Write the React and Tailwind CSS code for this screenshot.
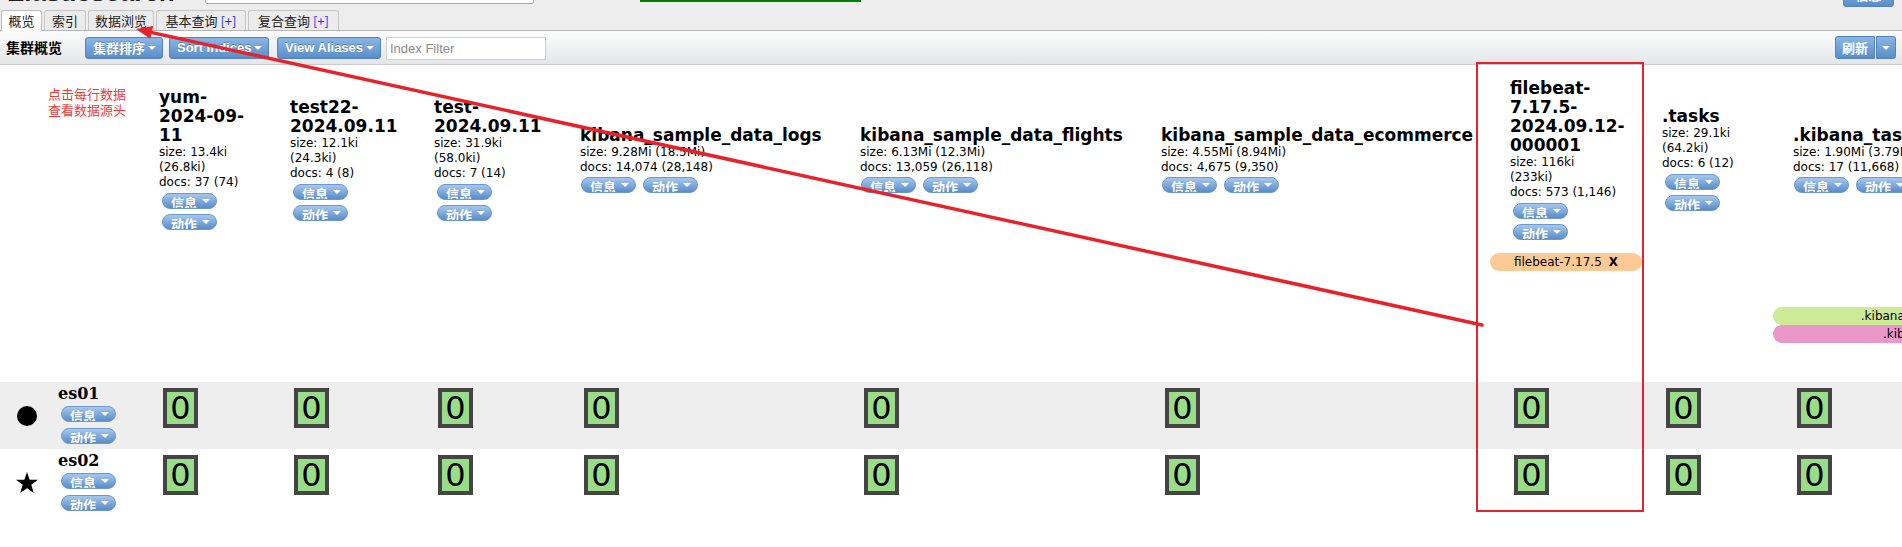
import React from 'react';

const indices = [
  { w: 'w-[131px]', name: ['yum-', '2024-09-', '11'], stats: ['size: 13.4ki', '(26.8ki)', 'docs: 37 (74)'] },
  { w: 'w-[144px]', name: ['test22-', '2024.09.11'], stats: ['size: 12.1ki', '(24.3ki)', 'docs: 4 (8)'] },
  { w: 'w-[146px]', name: ['test-', '2024.09.11'], stats: ['size: 31.9ki', '(58.0ki)', 'docs: 7 (14)'] },
  { w: 'w-[280px]', name: ['kibana_sample_data_logs'], stats: ['size: 9.28Mi (18.5Mi)', 'docs: 14,074 (28,148)'], inline: true },
  { w: 'w-[301px]', name: ['kibana_sample_data_flights'], stats: ['size: 6.13Mi (12.3Mi)', 'docs: 13,059 (26,118)'], inline: true },
  { w: 'w-[349px]', name: ['kibana_sample_data_ecommerce'], stats: ['size: 4.55Mi (8.94Mi)', 'docs: 4,675 (9,350)'], inline: true },
  { w: 'w-[152px]', name: ['filebeat-', '7.17.5-', '2024.09.12-', '000001'], stats: ['size: 116ki', '(233ki)', 'docs: 573 (1,146)'] },
  { w: 'w-[131px]', name: ['.tasks'], stats: ['size: 29.1ki', '(64.2ki)', 'docs: 6 (12)'] },
  { w: 'w-[355px]', name: ['.kibana_task_manager_7.17.5_001'], stats: ['size: 1.90Mi (3.79Mi)', 'docs: 17 (11,668)'], inline: true },
];

// alias rows: [row, column index, text, colour]
const aliases = [
  { row: 0, col: 6, text: 'filebeat-7.17.5', bg: 'bg-[#fdca96]', x: true },
  { row: 3, col: 8, text: '.kibana_task_manager_7.17.5', bg: 'bg-[#cdeb97]' },
  { row: 4, col: 8, text: '.kibana_task_manager', bg: 'bg-[#ea98c9]' },
];

const nodes = [
  { name: 'es01', icon: 'dot', bg: 'bg-[#eeeeee]' },
  { name: 'es02', icon: 'star', bg: 'bg-white' },
];

const cjk = "font-['Noto_Sans_CJK_SC',sans-serif]";

function Caret() {
  return <span className="w-0 h-0 border-x-[4px] border-x-transparent border-t-[4px] border-t-white" />;
}

function Pill({ label, className = '' }) {
  return (
    <div className={`w-[55px] h-[16px] rounded-full border border-[#6b99cf] bg-gradient-to-b from-[#a6c8ee] to-[#5a8cc7] flex items-start overflow-hidden pl-[8px] ${className}`}>
      <span className={`text-[13px] font-bold text-white leading-[17px] ${cjk}`}>{label}</span>
      <span className="ml-[5px] mt-[5px] flex"><Caret /></span>
    </div>
  );
}

function ToolBtn({ label, w, latin }) {
  return (
    <div className={`${w} h-[22px] rounded-[3px] border border-[#5283bf] bg-gradient-to-b from-[#8ab6e5] to-[#5a8dc8] flex items-center justify-between pl-[7px] pr-[6px] text-white text-[13px] font-bold [text-shadow:0_-1px_0_rgba(0,0,0,0.25)] ${latin ? "font-['Liberation_Sans',sans-serif]" : cjk}`}>
      <span className="leading-none">{label}</span>
      <Caret />
    </div>
  );
}

function Shard() {
  return (
    <div className="w-[35px] h-[40px] border-4 border-[#444] bg-[#99dd88] text-[32px] leading-[32px] text-center font-['DejaVu_Sans',sans-serif]">0</div>
  );
}

function Star() {
  return (
    <svg width="22" height="21" viewBox="0 0 24 23">
      <polygon points="12,0 14.9,8.4 24,8.6 16.7,14 19.4,23 12,17.7 4.6,23 7.3,14 0,8.6 9.1,8.4" fill="#000" />
    </svg>
  );
}

export default function App() {
  return (
    <div className="relative w-[1902px] h-[547px] overflow-hidden bg-white text-black font-['DejaVu_Sans','Noto_Sans_CJK_SC',sans-serif]">
      {/* header with cut-off top bar and tabs */}
      <div className="h-[31px] bg-[#ededed] border-b border-[#b8b8b8] flex flex-col">
        <div className="h-[10px] flex items-end overflow-hidden">
          <span className="ml-[7px] mb-[5px] text-[26px] font-bold leading-none text-[#222] font-['Liberation_Sans',sans-serif]">Elasticsearch</span>
          <div className="ml-[30px] mb-[6px] w-[329px] h-[24px] bg-white border border-[#a9a9a9] rounded-[2px]" />
          <div className="ml-[106px] mb-[8px] w-[221px] h-[20px] bg-[#008000] text-[13px] leading-[20px] text-center text-black">集群健康值: green (78 of 78)</div>
          <div className="ml-auto mr-[8px] mb-[3px] w-[51px] h-[22px] rounded-[3px] border border-[#5283bf] bg-gradient-to-b from-[#8ab6e5] to-[#5a8dc8] text-white text-[13px] font-bold text-center leading-[20px]">信息</div>
        </div>
        <div className={`h-[20px] flex items-end gap-[2px] pl-[1px] text-[13px] text-[#222] ${cjk}`}>
          <div className="w-[41px] h-[21px] -mb-px border border-b-0 border-[#bdbdbd] rounded-t-[3px] bg-white text-center leading-[20px]">概览</div>
          <div className="w-[42px] h-[20px] border border-b-0 border-[#c6c6c6] rounded-t-[3px] bg-[#ebebeb] text-center leading-[19px]">索引</div>
          <div className="w-[66px] h-[20px] border border-b-0 border-[#c6c6c6] rounded-t-[3px] bg-[#ebebeb] text-center leading-[19px]">数据浏览</div>
          <div className="w-[90px] h-[20px] border border-b-0 border-[#c6c6c6] rounded-t-[3px] bg-[#ebebeb] text-center leading-[19px]">基本查询 <span className="text-[#2b2bff]">[+]</span></div>
          <div className="w-[91px] h-[20px] border border-b-0 border-[#c6c6c6] rounded-t-[3px] bg-[#ebebeb] text-center leading-[19px]">复合查询 <span className="text-[#2b2bff]">[+]</span></div>
        </div>
      </div>

      {/* toolbar */}
      <div className="h-[34px] border-b border-[#c9cbcd] bg-gradient-to-b from-[#fcfcfc] to-[#e4e6e8] flex items-center">
        <span className={`ml-[6px] w-[79px] text-[14px] font-bold ${cjk}`}>集群概览</span>
        <ToolBtn label="集群排序" w="w-[78px]" />
        <div className="ml-[6px]"><ToolBtn label="Sort Indices" w="w-[100px]" latin /></div>
        <div className="ml-[8px]"><ToolBtn label="View Aliases" w="w-[104px]" latin /></div>
        <div className="ml-[5px] w-[160px] h-[23px] mt-[2px] bg-white border border-[#cfcfcf] pl-[3px] text-[13px] leading-[21px] text-[#8a8a8a] font-['Liberation_Sans',sans-serif]">Index Filter</div>
        <div className="ml-auto mr-[6px] flex gap-[1px]">
          <div className={`w-[40px] h-[23px] rounded-l-[3px] border border-[#5283bf] bg-gradient-to-b from-[#8ab6e5] to-[#5a8dc8] text-white text-[13px] font-bold text-center leading-[21px] ${cjk}`}>刷新</div>
          <div className="w-[20px] h-[23px] rounded-r-[3px] border border-[#5283bf] bg-gradient-to-b from-[#8ab6e5] to-[#5a8dc8] flex items-center justify-center"><Caret /></div>
        </div>
      </div>

      {/* cluster overview table */}
      <table className="table-fixed border-collapse w-[2128px]">
        <colgroup>
          <col className="w-[139px]" />
          {indices.map((ix, i) => <col key={i} className={ix.w} />)}
        </colgroup>
        <thead>
          <tr>
            <th className="p-0 h-[188px] align-top text-left font-normal">
              <div className={`pl-[48px] pt-[21px] text-[13px] leading-[16px] text-[#f23a3a] ${cjk}`}>点击每行数据<br />查看数据源头</div>
            </th>
            {indices.map((ix, i) => (
              <th key={i} className="p-0 pl-[20px] align-middle text-left font-normal">
                {ix.name.map((l) => (
                  <div key={l} className="text-[17px] font-bold leading-[19px] whitespace-nowrap">{l}</div>
                ))}
                {ix.stats.map((l) => (
                  <div key={l} className="text-[12px] leading-[15px] whitespace-nowrap">{l}</div>
                ))}
                {ix.inline ? (
                  <div className="flex gap-[7px] mt-[2px] ml-[1px]">
                    <Pill label="信息" />
                    <Pill label="动作" />
                  </div>
                ) : (
                  <div className="mt-[3px] ml-[3px]">
                    <Pill label="信息" />
                    <Pill label="动作" className="mt-[5px]" />
                  </div>
                )}
              </th>
            ))}
          </tr>
          {[0, 1, 2, 3, 4, 5, 6].map((r) => (
            <tr key={r} className="h-[18px]">
              <td className="p-0" />
              {indices.map((ix, c) => {
                const a = aliases.find((x) => x.row === r && x.col === c);
                return (
                  <td key={c} className="p-0 h-[18px]">
                    {a && (
                      <div className={`h-[18px] rounded-full ${a.bg} text-[12px] leading-[18px] text-center whitespace-nowrap`}>
                        {a.text}
                        {a.x && <b className="ml-[7px]">X</b>}
                      </div>
                    )}
                  </td>
                );
              })}
            </tr>
          ))}
          <tr className="h-[3px]"><td colSpan={10} className="p-0" /></tr>
        </thead>
        <tbody>
          {nodes.map((n) => (
            <tr key={n.name} className={n.bg}>
              <td className="p-0 align-top">
                <div className="h-[67px] flex items-center">
                  <div className="ml-[16px] w-[22px] flex justify-center">
                    {n.icon === 'dot' ? <div className="w-[20px] h-[20px] rounded-full bg-black" /> : <Star />}
                  </div>
                  <div className="ml-[20px] self-start pt-[2px]">
                    <div className="text-[16px] font-bold leading-[20px] font-['DejaVu_Serif',serif]">{n.name}</div>
                    <div className="ml-[3px] mt-[2px]">
                      <Pill label="信息" />
                      <Pill label="动作" className="mt-[6px]" />
                    </div>
                  </div>
                </div>
              </td>
              {indices.map((ix, i) => (
                <td key={i} className="p-0 pl-[24px] pt-[6px] align-top">
                  <Shard />
                </td>
              ))}
            </tr>
          ))}
        </tbody>
      </table>

      {/* screenshot annotations: red box and arrow */}
      <div className="absolute left-[1476px] top-[62px] w-[168px] h-[450px] border-2 border-[#e8222a] pointer-events-none" />
      <svg className="absolute left-0 top-0 pointer-events-none" width="1902" height="547">
        <line x1="151" y1="32.4" x2="1482" y2="325" stroke="#e8222a" strokeWidth="3.5" strokeLinecap="round" />
        <polygon points="136,29 150.3,38.8 153.2,26" fill="#e8222a" />
      </svg>
    </div>
  );
}
